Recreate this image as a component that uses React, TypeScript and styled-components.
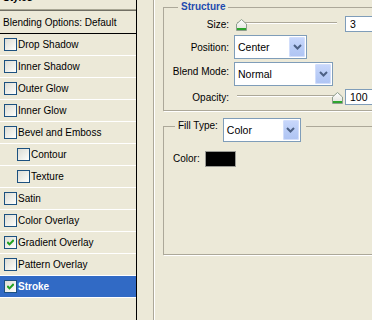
import React from "react";
import styled, { createGlobalStyle, css } from "styled-components";

const Global = createGlobalStyle`
  html, body { margin: 0; padding: 0; overflow: hidden; background: #ECE9D8; }
  body {
    font-family: "Liberation Sans", Arial, sans-serif;
    font-size: 10px;
    color: #000;
  }
`;

const Window = styled.div`
  width: 372px;
  height: 320px;
  overflow: hidden;
  display: flex;
  background: #ECE9D8;
`;

/* ---------- left styles list ---------- */

const StylesPanel = styled.div`
  width: 136px;
  flex: none;
  border-right: 1px solid #000;
  display: flex;
  flex-direction: column;
`;

const PanelHeader = styled.div`
  height: 9px;
  overflow: hidden;
  border-bottom: 1px solid #A9A795;
  padding-left: 3px;
  font-weight: bold;
  line-height: 12px;
`;

const HeaderText = styled.div`
  margin-top: -8px;
`;

const BlendingRow = styled.div`
  height: 22px;
  border-top: 1px solid #716F64;
  border-bottom: 1px solid #000;
  display: flex;
  align-items: center;
  padding-left: 3px;
`;

const StyleRow = styled.div<{ $indent?: boolean; $selected?: boolean }>`
  height: 21px;
  border-bottom: 1px solid #fff;
  display: flex;
  align-items: center;
  gap: 1px;
  padding-left: ${(p) => (p.$indent ? 17 : 4)}px;
  ${(p) =>
    p.$selected &&
    css`
      background: #316AC5;
      color: #fff;
      font-weight: bold;
    `}
`;

const CheckBox = styled.span`
  width: 11px;
  height: 11px;
  flex: none;
  border: 1px solid #1C5180;
  background: linear-gradient(135deg, #DCDCD5 0%, #F4F4F0 70%, #FFFFFF 100%);
  display: flex;
  align-items: center;
  justify-content: center;
`;

const Check = () => (
  <svg width="7" height="7" viewBox="0 0 7 7">
    <path d="M0.3 3 L2.5 5.4 L6.7 1" fill="none" stroke="#21A121" strokeWidth="2" />
  </svg>
);

/* ---------- right side ---------- */

const Gutter = styled.div`
  width: 16px;
  flex: none;
`;

const Frame = styled.div`
  flex: 1;
  min-width: 0;
  border-left: 1px solid #ACA899;
  box-shadow: inset 1px 0 0 #fff;
  padding-left: 9px;
  display: flex;
  flex-direction: column;
  gap: 7px;
`;

const GroupBox = styled.fieldset`
  flex: none;
  margin: 0;
  padding: 0;
  min-width: 0;
  width: 240px;
  border: 1px solid #ACA899;
  box-shadow: 1px 1px 0 #fff;
`;

const TitleLegend = styled.legend`
  margin-left: 14px;
  padding: 0 3px;
  line-height: 14px;
  font-weight: bold;
  color: #1E4BAF;
`;

const ControlLegend = styled.legend`
  margin-left: 11px;
  padding: 0 5px 0 3px;
  height: 16px;
  display: flex;
  align-items: flex-start;
  gap: 5px;
`;

const LegendLabel = styled.span`
  line-height: 16px;
`;

const StructureBody = styled.div`
  height: 96px;
  box-sizing: border-box;
  padding-top: 2px;
  display: grid;
  grid-template-columns: 65px auto;
  grid-template-rows: 16px 24px 24px 16px;
  column-gap: 5px;
  row-gap: 3px;
`;

const FieldLabel = styled.div<{ $lift?: number }>`
  text-align: right;
  align-self: center;
  margin-bottom: ${(p) => p.$lift ?? 0}px;
`;

const ControlCell = styled.div`
  display: flex;
  align-items: flex-start;
  gap: 2px;
`;

const Slider = styled.div<{ $end?: boolean }>`
  width: 107px;
  height: 16px;
  margin-left: 2px;
  display: flex;
  justify-content: ${(p) => (p.$end ? "flex-end" : "flex-start")};
  align-items: flex-start;
  background:
    linear-gradient(#ACA899, #ACA899) 1px 6px / 100px 1px no-repeat,
    linear-gradient(#fff, #fff) 1px 7px / 100px 1px no-repeat;
`;

const Thumb = styled.svg`
  margin-top: 3px;
  flex: none;
`;

const SliderThumb = () => (
  <Thumb width="11" height="12" viewBox="0 0 11 12">
    <defs>
      <linearGradient id="thumbFill" x1="0" y1="0" x2="0" y2="1">
        <stop offset="0" stopColor="#FFFFFF" />
        <stop offset="1" stopColor="#E2E2DA" />
      </linearGradient>
    </defs>
    <path d="M5.5 0.5 L10.5 5 V11.5 H0.5 V5 Z" fill="url(#thumbFill)" stroke="#8E9E8E" />
    <path d="M1 10 H10" stroke="#2DA52D" strokeWidth="2" />
  </Thumb>
);

const NumberBox = styled.div`
  width: 40px;
  height: 16px;
  box-sizing: border-box;
  border: 1px solid #7F9DB9;
  background: #fff;
  padding-left: 4px;
  line-height: 14px;
  font-size: 10.5px;
`;

const Select = styled.div<{ $w: number }>`
  width: ${(p) => p.$w}px;
  height: 24px;
  box-sizing: border-box;
  border: 1px solid #7F9DB9;
  background: #fff;
  padding: 1px;
  display: flex;
  align-items: stretch;
  flex: none;
`;

const SelectText = styled.div`
  flex: 1;
  padding-left: 2px;
  display: flex;
  align-items: center;
  font-size: 10.5px;
`;

const ArrowButton = styled.div`
  width: 16px;
  border-radius: 2px;
  background: linear-gradient(180deg, #C9D8FC 0%, #B7CBF6 60%, #AFC4F3 100%);
  box-shadow: inset 0 0 0 1px #D2DEFB;
  display: flex;
  align-items: center;
  justify-content: center;
`;

const Chevron = () => (
  <svg width="9" height="6" viewBox="0 0 9 6">
    <path d="M1 1 L4.5 4.5 L8 1" fill="none" stroke="#4D6185" strokeWidth="2" />
  </svg>
);

const Dropdown = ({ w, value }: { w: number; value: string }) => (
  <Select $w={w}>
    <SelectText>{value}</SelectText>
    <ArrowButton>
      <Chevron />
    </ArrowButton>
  </Select>
);

const FillBody = styled.div`
  height: 120px;
  box-sizing: border-box;
  padding: 17px 0 0 9px;
  display: flex;
  align-items: flex-start;
  gap: 5px;
`;

const ColorLabel = styled.span`
  line-height: 16px;
`;

const Swatch = styled.div`
  width: 31px;
  height: 16px;
  box-sizing: border-box;
  border: 1px solid #9A9A94;
  background: #000;
`;

const styleItems: { label: string; checked?: boolean; indent?: boolean; selected?: boolean }[] = [
  { label: "Drop Shadow" },
  { label: "Inner Shadow" },
  { label: "Outer Glow" },
  { label: "Inner Glow" },
  { label: "Bevel and Emboss" },
  { label: "Contour", indent: true },
  { label: "Texture", indent: true },
  { label: "Satin" },
  { label: "Color Overlay" },
  { label: "Gradient Overlay", checked: true },
  { label: "Pattern Overlay" },
  { label: "Stroke", checked: true, selected: true },
];

export default function App() {
  return (
    <>
      <Global />
      <Window>
        <StylesPanel>
          <PanelHeader>
            <HeaderText>Styles</HeaderText>
          </PanelHeader>
          <BlendingRow>Blending Options: Default</BlendingRow>
          {styleItems.map((it) => (
            <StyleRow key={it.label} $indent={it.indent} $selected={it.selected}>
              <CheckBox>{it.checked && <Check />}</CheckBox>
              <span>{it.label}</span>
            </StyleRow>
          ))}
        </StylesPanel>
        <Gutter />
        <Frame>
          <GroupBox>
            <TitleLegend>Structure</TitleLegend>
            <StructureBody>
              <FieldLabel>Size:</FieldLabel>
              <ControlCell>
                <Slider>
                  <SliderThumb />
                </Slider>
                <NumberBox>3</NumberBox>
              </ControlCell>
              <FieldLabel>Position:</FieldLabel>
              <ControlCell>
                <Dropdown w={73} value="Center" />
              </ControlCell>
              <FieldLabel $lift={5}>Blend Mode:</FieldLabel>
              <ControlCell>
                <Dropdown w={99} value="Normal" />
              </ControlCell>
              <FieldLabel>Opacity:</FieldLabel>
              <ControlCell>
                <Slider $end>
                  <SliderThumb />
                </Slider>
                <NumberBox>100</NumberBox>
              </ControlCell>
            </StructureBody>
          </GroupBox>
          <GroupBox>
            <ControlLegend>
              <LegendLabel>Fill Type:</LegendLabel>
              <Dropdown w={78} value="Color" />
            </ControlLegend>
            <FillBody>
              <ColorLabel>Color:</ColorLabel>
              <Swatch />
            </FillBody>
          </GroupBox>
        </Frame>
      </Window>
    </>
  );
}
